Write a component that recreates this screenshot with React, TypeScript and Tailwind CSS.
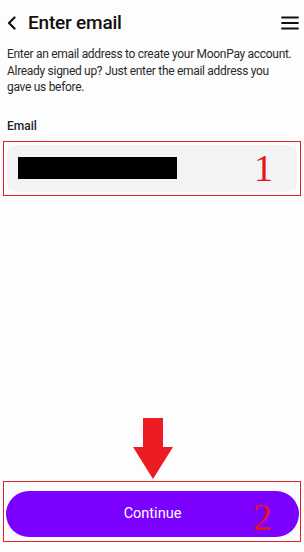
import React from 'react';

const font = { fontFamily: 'Roboto, "Noto Sans", sans-serif' };

const BackIcon: React.FC = () => (
  <svg width="10" height="14" viewBox="0 0 10 14" fill="none">
    <path d="M7.5 1.5 L2 7 L7.5 12.5" stroke="#111" strokeWidth="2.2" strokeLinecap="round" strokeLinejoin="round" />
  </svg>
);

const MenuIcon: React.FC = () => (
  <svg width="18" height="14" viewBox="0 0 18 14" fill="none">
    <path d="M1 1.5 H17 M1 7 H17 M1 12.5 H17" stroke="#111" strokeWidth="1.8" strokeLinecap="round" />
  </svg>
);

const DownArrow: React.FC = () => (
  <svg width="42" height="62" viewBox="0 0 42 62">
    <path d="M11 0 H31 V29 H41 L21 61 L1 29 H11 Z" fill="#ed1c24" />
  </svg>
);

export default function App() {
  return (
    <div className="flex h-[552px] w-[304px] flex-col bg-[#fdfdfd] text-[#1a1a1a]" style={font}>
      <div className="flex h-[46px] items-center justify-between pl-[7px] pr-[5px]">
        <div className="flex items-center gap-[11px]">
          <BackIcon />
          <h1 className="text-[19px] font-medium tracking-[-0.2px] text-[#111]">Enter email</h1>
        </div>
        <MenuIcon />
      </div>

      <p className="pl-[7px] pr-[2px] text-[12px] leading-[16.5px] tracking-[-0.3px] text-[#2a2a2a]">
        Enter an email address to create your MoonPay account.
        <br />
        Already signed up? Just enter the email address you
        <br />
        gave us before.
      </p>

      <label className="mt-[21px] px-[7px] text-[12px] font-medium text-[#222]">Email</label>

      <div className="mx-[3px] mt-[6px] border border-[#e0202a] p-[3px]">
        <div className="flex h-[47px] items-center justify-between rounded-[10px] bg-[#f3f3f6] pl-[11px] pr-[24px]">
          <div className="h-[22px] w-[159px] bg-black" />
          <span className="text-[38px] leading-none text-[#e8141c]" style={{ fontFamily: '"Liberation Serif", serif' }}>
            1
          </span>
        </div>
      </div>

      <div className="flex-1" />

      <div className="flex justify-center pl-[2px]">
        <DownArrow />
      </div>

      <div className="mx-[3px] mb-[10px] mt-[1px] border border-[#e0202a] pb-[4px] pl-[2px] pr-[1px] pt-[9px]">
        <button className="relative flex h-[46px] w-full items-center justify-center rounded-full bg-[#7b00ff] text-[14.5px] text-white">
          Continue
          <span
            className="absolute right-[27px] top-[7px] text-[38px] leading-none text-[#e8141c]"
            style={{ fontFamily: '"Liberation Serif", serif' }}
          >
            2
          </span>
        </button>
      </div>
    </div>
  );
}
